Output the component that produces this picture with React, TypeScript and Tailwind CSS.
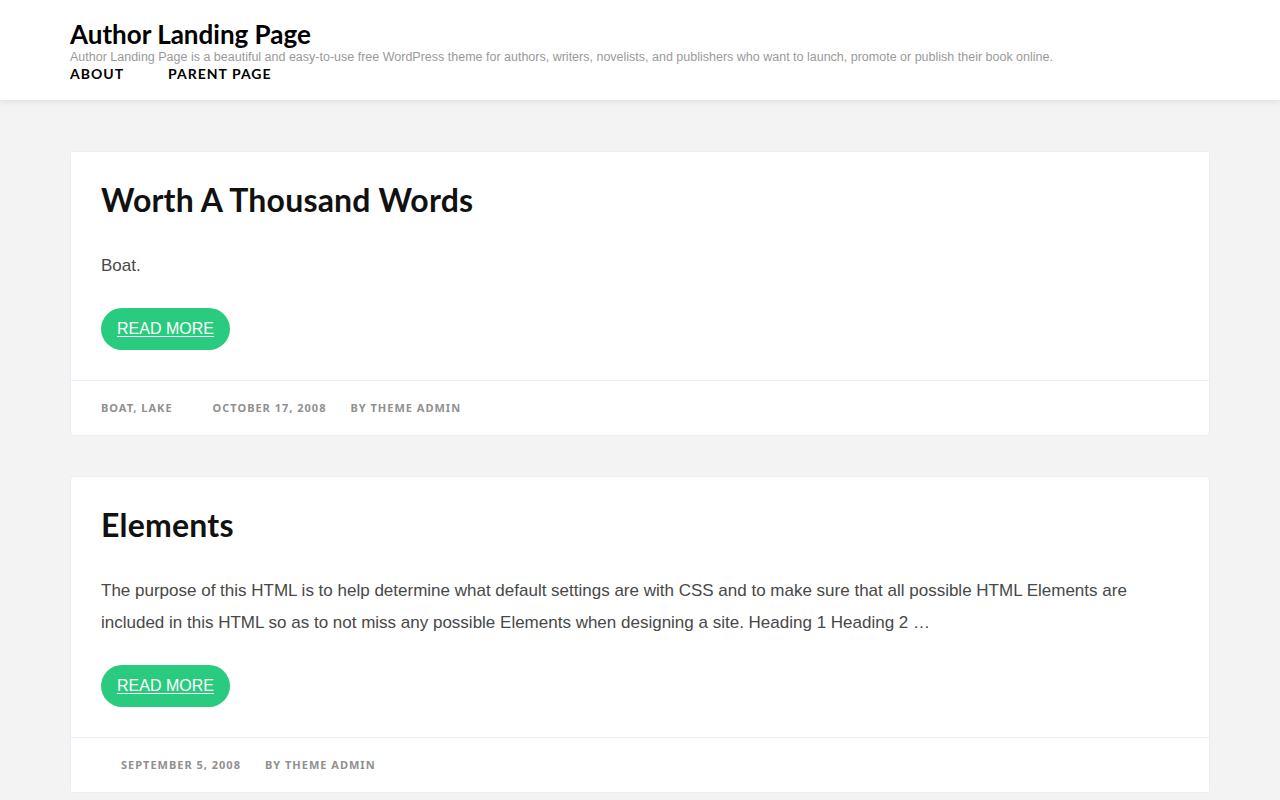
const heading = { fontFamily: '"Lato", "Noto Sans", sans-serif' }
const body = { fontFamily: '"Liberation Sans", Arial, sans-serif' }
const meta = { fontFamily: '"Noto Sans", "Open Sans", sans-serif' }

const posts = [
  {
    title: 'Worth A Thousand Words',
    excerpt: 'Boat.',
    cats: 'Boat, Lake',
    date: 'October 17, 2008',
  },
  {
    title: 'Elements',
    excerpt:
      'The purpose of this HTML is to help determine what default settings are with CSS and to make sure that all possible HTML Elements are included in this HTML so as to not miss any possible Elements when designing a site. Heading 1 Heading 2 …',
    cats: '',
    date: 'September 5, 2008',
  },
]

function Post({ title, excerpt, cats, date }: (typeof posts)[0]) {
  return (
    <article className="mb-10 rounded-[3px] border border-[#e9eef6] bg-white">
      <div className="px-[30px] pt-[28px] pb-[30px]">
        <h2 className="text-[32px] font-bold leading-[40px] tracking-[0.2px] text-[#111]" style={heading}>
          {title}
        </h2>
        <p className="mt-[30px] text-[17px] leading-[32px] text-[#484848]" style={body}>
          {excerpt}
        </p>
        <a
          href="#"
          className="mt-[26px] inline-flex h-[42px] items-center rounded-full bg-[#29cb7e] px-4 text-[16px] text-white underline underline-offset-2"
          style={body}
        >
          READ MORE
        </a>
      </div>
      <div
        className="flex h-[55px] items-center border-t border-[#e9eef6] px-[30px] text-[11px] font-bold uppercase tracking-[1px] text-[#909090]"
        style={meta}
      >
        {cats ? <span className="mr-10">{cats}</span> : <span className="inline-block w-5" />}
        <span className="mr-6">{date}</span>
        <span>By Theme Admin</span>
      </div>
    </article>
  )
}

export default function App() {
  return (
    <div className="min-h-[800px] bg-[#f3f3f3]">
      <header className="bg-white px-[70px] pt-[18px] pb-[17px] shadow-[0_2px_6px_rgba(0,0,0,0.08)]">
        <h1 className="text-[26px] font-bold leading-[32px] text-black" style={heading}>
          Author Landing Page
        </h1>
        <p className="text-[12.5px] leading-[15px] text-[#9a9a9a]" style={body}>
          Author Landing Page is a beautiful and easy-to-use free WordPress theme for authors, writers, novelists, and publishers who want to launch, promote or publish their book online.
        </p>
        <nav className="flex gap-[44px] text-[14px] font-bold uppercase leading-[18px] tracking-[1px] text-black" style={heading}>
          <a href="#">About</a>
          <a href="#">Parent Page</a>
        </nav>
      </header>
      <main className="px-[70px] pt-[51px]">
        {posts.map((p) => (
          <Post key={p.title} {...p} />
        ))}
      </main>
    </div>
  )
}
